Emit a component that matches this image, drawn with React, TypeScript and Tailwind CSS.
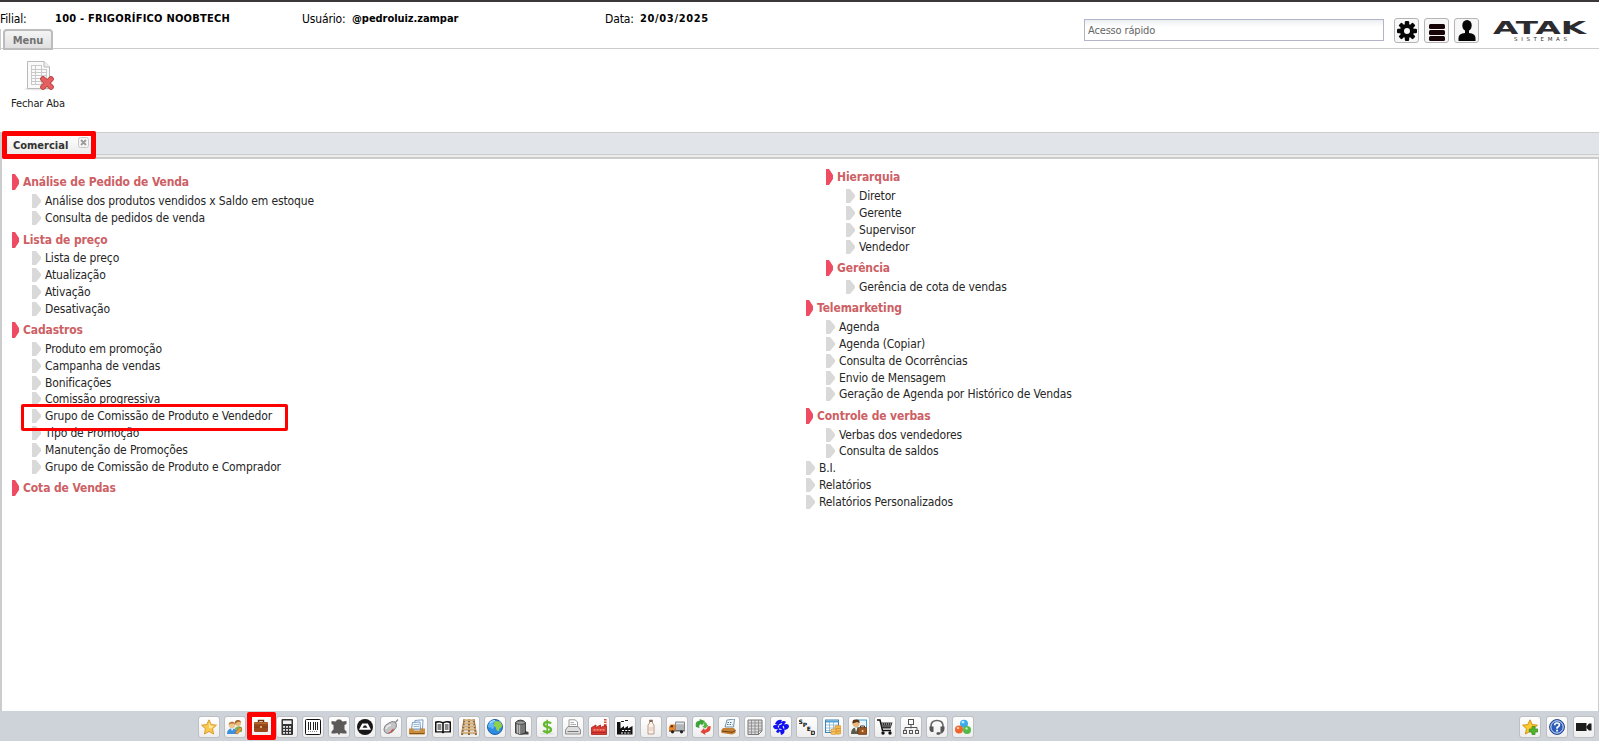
import type { ReactNode } from "react";

type Entry = { label: string; kind: "group" | "item"; depth: 0 | 1 | 2 };

const g = (label: string, depth: 0 | 1 | 2 = 0): Entry => ({ label, kind: "group", depth });
const i = (label: string, depth: 0 | 1 | 2 = 1): Entry => ({ label, kind: "item", depth });

const leftEntries: Entry[] = [
  g("Análise de Pedido de Venda"),
  i("Análise dos produtos vendidos x Saldo em estoque"),
  i("Consulta de pedidos de venda"),
  g("Lista de preço"),
  i("Lista de preço"),
  i("Atualização"),
  i("Ativação"),
  i("Desativação"),
  g("Cadastros"),
  i("Produto em promoção"),
  i("Campanha de vendas"),
  i("Bonificações"),
  i("Comissão progressiva"),
  i("Grupo de Comissão de Produto e Vendedor"),
  i("Tipo de Promoção"),
  i("Manutenção de Promoções"),
  i("Grupo de Comissão de Produto e Comprador"),
  g("Cota de Vendas"),
];

const rightEntries: Entry[] = [
  g("Hierarquia", 1),
  i("Diretor", 2),
  i("Gerente", 2),
  i("Supervisor", 2),
  i("Vendedor", 2),
  g("Gerência", 1),
  i("Gerência de cota de vendas", 2),
  g("Telemarketing"),
  i("Agenda"),
  i("Agenda (Copiar)"),
  i("Consulta de Ocorrências"),
  i("Envio de Mensagem"),
  i("Geração de Agenda por Histórico de Vendas"),
  g("Controle de verbas"),
  i("Verbas dos vendedores"),
  i("Consulta de saldos"),
  i("B.I.", 0),
  i("Relatórios", 0),
  i("Relatórios Personalizados", 0),
];

const indent = { 0: "pl-0", 1: "pl-5", 2: "pl-10" };

function MenuRow({ entry }: { entry: Entry }) {
  const pad = indent[entry.depth];
  if (entry.kind === "group") {
    return (
      <li className={`flex h-[23.4px] items-center pt-[3px] ${pad}`}>
        <svg className="mr-1 h-4 w-[7px] shrink-0" viewBox="0 0 7 16">
          <path d="M0 0H3L7 6V10L3 16H0Z" fill="#ef4b63" />
        </svg>
        <a className="text-[12px] leading-4 font-bold tracking-[-0.12px] whitespace-nowrap text-[#cd6064]">
          {entry.label}
        </a>
      </li>
    );
  }
  return (
    <li className={`flex h-[16.83px] items-center ${pad}`}>
      <svg className="mr-1 h-3.5 w-[9px] shrink-0" viewBox="0 0 9 14">
        <path d="M0 0H4L9 6V8L4 14H0Z" fill="#d9d9d9" />
      </svg>
      <a className="text-[12px] leading-4 tracking-[-0.14px] whitespace-nowrap text-[#262626]">{entry.label}</a>
    </li>
  );
}

function Ico({ children }: { children: ReactNode }) {
  return (
    <svg className="h-4 w-4 shrink-0" viewBox="0 0 16 16">
      {children}
    </svg>
  );
}

const star = "M8 .8L10.2 5.6L15.4 6.2L11.5 9.8L12.6 15L8 12.4L3.4 15L4.5 9.8L.6 6.2L5.8 5.6Z";

const StarIcon = (
  <Ico>
    <path d={star} fill="#fbc84f" stroke="#d99a2b" />
    <path d="M8 3L9.3 6.6L13 7L10 9.2L8 9Z" fill="#fde9a0" />
  </Ico>
);
const UsersIcon = (
  <Ico>
    <circle cx="11" cy="4" r="3" fill="#e9b87a" />
    <path d="M8 3.5C8 0 14 0 14 3.5L13 2.8H10L8.8 5Z" fill="#9a5a1c" />
    <path d="M8 12V9Q11 6 15 8.500V13Z" fill="#7db35a" />
    <circle cx="5" cy="6" r="3.200" fill="#f0c58e" />
    <path d="M1.700 6C1.500 1.500 8.500 1.500 8.300 6L7 4.500H3.500Z" fill="#b4702a" />
    <path d="M0 15Q0 9.500 5 9.500Q10 9.500 10 15Z" fill="#3d8fe0" />
    <path d="M4 9.500L5 12L6.500 9.500Z" fill="#fff" />
    <path d="M8 14L13 8L15 10L10.500 15Z" fill="#e8a13c" stroke="#a96a1d" strokeWidth=".6" />
  </Ico>
);
const BriefcaseIcon = (
  <Ico>
    <path d="M5.500 4V2.500H10.500V4" fill="none" stroke="#6b3312" strokeWidth="1.400" />
    <rect x="1" y="4" width="14" height="10" rx="1.300" fill="#98481c" />
    <path d="M1 8.700H15V9.400H1Z" fill="#74340f" />
    <rect x="1.500" y="4.500" width="13" height="1.500" fill="#b9652f" />
    <rect x="7.200" y="8" width="1.600" height="2" fill="#e9c58d" />
  </Ico>
);
const CalculatorIcon = (
  <Ico>
    <rect x="2.500" y="0" width="11.500" height="16" rx="1" fill="#333" />
    <rect x="4" y="1.500" width="8.500" height="3.500" fill="#f1f1f1" />
    {[7, 10, 13].map((y) =>
      [4, 7, 10].map((x) => <rect key={`${x}-${y}`} x={x} y={y} width="2" height="1.800" fill="#ddd" />),
    )}
  </Ico>
);
const BarcodeIcon = (
  <Ico>
    <rect x=".5" y=".5" width="15" height="15" rx="1" fill="#fff" stroke="#111" />
    <path d="M3.500 3V11M5.500 3V11M8.500 3V11M10.500 3V11M12.500 3V11" stroke="#222" />
    <path d="M3 12.500H13" stroke="#888" strokeDasharray="1 1" />
  </Ico>
);
const LeatherIcon = (
  <Ico>
    <path
      d="M.5 2L4.500 2.500L6.500 .5H9.500L11.500 2.500L15.500 2V5L13.500 6V10.500L15.500 12.500V14.500L12 14.500L9.500 14L8 16L6.500 14L4 14.500H.5V12.500L2.500 10.500V6L.5 5Z"
      fill="#5c5a58"
    />
  </Ico>
);
const AtakIcon = (
  <Ico>
    <circle cx="8" cy="8" r="8" fill="#171717" />
    <path d="M2 10.800L5.200 4.500H10.800L14 10.800Z" fill="#fff" />
    <path d="M5.500 8.800L7 6.500H9L10.500 8.800Z" fill="#171717" />
  </Ico>
);
const MeatIcon = (
  <Ico>
    <path d="M1 10Q1 6 6 4Q9 1.500 12 3Q14.500 5 13 8.500Q10 14 5.500 14.500Q1 14.500 1 10Z" fill="#c3c3c5" stroke="#858588" />
    <path d="M3 10Q4 6.500 8 6" fill="none" stroke="#eee" strokeWidth="1.500" />
    <path d="M12 4L15 .5" stroke="#888" strokeWidth="1.200" />
    <path d="M5.500 13.500Q8 13 9 10.500L11 9.500Q10 13.500 5.500 14.500Z" fill="#c9473c" />
  </Ico>
);
const TrayIcon = (
  <Ico>
    <path d="M6 1.500L14 .8L13.500 10H5Z" fill="#fff" stroke="#5b87b5" strokeWidth=".8" />
    <path d="M3.500 3.500L11 3L11.500 10H2.500Z" fill="#f4f9fd" stroke="#5b87b5" strokeWidth=".8" />
    <path d="M4.500 5.500H10M4.500 7.500H10" stroke="#9bbad6" />
    <path d="M0 9.500H4L5.500 11.500H10.500L12 9.500H16V14.500Q16 15.500 15 15.500H1Q0 15.500 0 14.500Z" fill="#c98d3d" />
    <path d="M.5 14.500H15.500" stroke="#84551b" />
  </Ico>
);
const BookIcon = (
  <Ico>
    <path d="M0 2.500Q4 1.500 8 3Q12 1.500 16 2.500V13.500H9.500L8 14.500L6.500 13.500H0Z" fill="#111" />
    <path d="M1.500 4Q4.500 3 7.200 4.300V12.300H1.500ZM8.800 4.300Q11.500 3 14.500 4V12.300H8.800Z" fill="#fff" />
    <path d="M2.500 6H6.300M2.500 8H6.300M2.500 10H6.300M9.800 6H13.500M9.800 8H13.500M9.800 10H13.500" stroke="#111" />
  </Ico>
);
const PalletIcon = (
  <Ico>
    <path d="M3.500 0L1 16M12.500 0L15 16M8 0V16" stroke="#8b6436" strokeWidth="2" />
    <path d="M3 1.200H13M2.700 4.200H13.300M2 7.200H14M1.200 10.200H14.800M.4 13.500H15.600" stroke="#d8b27c" strokeWidth="1.700" />
    <path d="M3 2.300H13M2.500 5.300H13.500M1.800 8.300H14.200M1 11.300H15M.4 14.700H15.600" stroke="#9a7040" strokeWidth=".5" />
  </Ico>
);
const GlobeIcon = (
  <Ico>
    <circle cx="8" cy="8" r="7.500" fill="#2d8ce0" stroke="#1a5cab" />
    <path d="M5 1.200Q1 3.500 1 8Q3 9 4 8L5 10.500Q7 9.500 7.500 6.500L6 4.500L8.500 2.500Z" fill="#5fb8f5" />
    <path d="M8 2L13 2.500Q15.500 5 15 8L12.500 9.500L12 12.500L9.500 11L8.500 8L6.500 6.500Z" fill="#8fd14c" />
    <path d="M3 4Q5 1.700 8 1.500" fill="none" stroke="#c9f0ff" />
  </Ico>
);
const BarrelIcon = (
  <Ico>
    <path d="M12 12L15.500 13V15.500H8Z" fill="#444" />
    <path d="M2.500 3.500Q7.500-1.500 12.500 3.500V14Q7.500 17 2.500 14Z" fill="#777" stroke="#2a2a2a" strokeWidth=".8" />
    <path d="M4.500 5V14.500M6.500 5V15" stroke="#bdbdbd" strokeWidth="1.200" />
    <ellipse cx="7.500" cy="3.600" rx="4.800" ry="1.800" fill="#9b9b9b" stroke="#333" strokeWidth=".7" />
  </Ico>
);
const DollarIcon = (
  <Ico>
    <ellipse cx="8" cy="14.800" rx="7" ry="1" fill="#e0e0e0" />
    <path
      d="M12 4.500Q11 3.200 8.300 3.200Q5 3.200 5 5.500Q5 7.300 8.300 7.900Q12 8.500 12 10.800Q12 13 8.300 13Q5.300 13 4.200 11.500"
      fill="none"
      stroke="#62b92f"
      strokeWidth="2.300"
    />
    <path d="M8.200 .8V15" stroke="#62b92f" strokeWidth="1.600" />
  </Ico>
);
const PrinterIcon = (
  <Ico>
    <path d="M4 8V.8H10L12.500 3V8" fill="#fff" stroke="#999" />
    <path d="M5.500 3.500H9M5.500 5.500H11" stroke="#aaa" />
    <path d="M3 7.500H13L15.500 11V15H.5V11Z" fill="#dedede" stroke="#8e8e8e" />
    <path d="M2.500 12.500H13.500" stroke="#777" />
  </Ico>
);
const RedFactoryIcon = (
  <Ico>
    <path d="M13 0H15.500V8H13Z" fill="#d94a3a" />
    <path d="M13 2H15.500M13 4.500H15.500" stroke="#fff" />
    <path d="M.5 15.500V8.500L5 6V8.500L9.500 6V8.500L13 7H15.500V15.500Z" fill="#d93b30" stroke="#a8201c" strokeWidth=".8" />
    <path d="M2.500 10.800H13.500" stroke="#f5a79c" strokeWidth="1.300" strokeDasharray="2 1" />
    <path d="M1 13.500H15" stroke="#aa211c" strokeWidth=".8" />
  </Ico>
);
const FactoryIcon = (
  <Ico>
    <path d="M0 15.500V3H3.500V9.500L7 7V9.500L11 7V9.500L15.500 7V15.500Z" fill="#111" />
    <path d="M5 11.500H14M4 14H14" stroke="#fff" strokeWidth="1.200" strokeDasharray="2 1.200" />
    <path d="M4 2.500H7M8 1.500H11" stroke="#222" strokeWidth="1.200" />
  </Ico>
);
const BottleIcon = (
  <Ico>
    <path d="M6.500 1H9.500V4L11 6V15H5V6L6.500 4Z" fill="#fbf1ea" stroke="#b89c8b" />
    <path d="M6.500 1H9.500V3H6.500Z" fill="#7f685b" />
    <path d="M6 8H10V12H6Z" fill="#efd8ca" />
  </Ico>
);
const TruckIcon = (
  <Ico>
    <path d="M6.500 3H15.500V11.500H6.500Z" fill="#b3b7bb" stroke="#858a8f" />
    <path d="M7 4.500H15" stroke="#e2e5e7" strokeWidth="1.500" />
    <path d="M0 12.500V8L1.500 5.500H6V12.500Z" fill="#ef8421" />
    <path d="M1.200 8L2.200 6.300H4V8.300H1.200Z" fill="#513018" />
    <path d="M0 12H16" stroke="#444" strokeWidth=".8" />
    <circle cx="3.500" cy="12.800" r="1.600" fill="#222" />
    <circle cx="12.500" cy="12.800" r="1.600" fill="#222" />
  </Ico>
);
const SyncIcon = (
  <Ico>
    <path d="M1 8Q-.5 2 5 1.500L4.500 0L10 2L7 6.500L6 5Q3.500 5.500 4.500 9Z" fill="#3da33a" />
    <path d="M8 3Q12 2.500 12 6L13.500 6L10.500 9.500L7 7.500L8.700 7Q9 5 8 3Z" fill="#54b947" />
    <path d="M12.500 7.500L15.500 7Q16.500 13 10 14L10.500 16L5.500 13L9 9L9.500 10.800Q12.500 10.500 12.500 7.500Z" fill="#df4538" />
  </Ico>
);
const RegisterIcon = (
  <Ico>
    <path d="M6 1L13.500 0L12.500 8H4Z" fill="#f0f7fb" stroke="#587991" strokeWidth=".8" />
    <path d="M6.500 3.500H11.500M6 5.500H11.500" stroke="#557b99" strokeDasharray="1.500 1" />
    <path d="M2 9H13L14.500 11V14L11 15.500L.5 14V11Z" fill="#c58136" />
    <path d="M.5 12L11 13.300L14.500 11.500" fill="none" stroke="#70400e" />
  </Ico>
);
const SheetIcon = (
  <Ico>
    <path d="M1 1H15V12L11.500 15.500H1Z" fill="#ddd" stroke="#777" />
    <path d="M1 4H15M1 7H15M1 10H15M1 13H12M4.500 1V15M8 1V15M11.500 1V12" stroke="#888" strokeWidth=".8" />
    <path d="M11.500 15.500V12H15Z" fill="#fff" stroke="#777" />
  </Ico>
);
const PinwheelIcon = (
  <Ico>
    <path
      d="M2 5Q4 0 9 1L8 3Q11 1 13 3L11 5.500Q16 4 16 8Q14 11.500 11.500 10.500Q12 15 8 16L7 12Q5 15.500 3 12.500L5 10Q.5 11 0 7Q1 5.500 4.500 6Z"
      fill="#1010f0"
    />
    <path d="M6 6L9 4.500M10 7L11 9.500M8.500 10.500L5.800 10M5.500 8.500L5.300 6.500" stroke="#f5f5ff" strokeWidth="1.100" />
  </Ico>
);
const SpedIcon = (
  <Ico>
    <g fontFamily="DejaVu Sans, sans-serif" fontWeight="700" fontSize="6" fill="#111">
      <text x="-.5" y="5">S</text>
      <text x="3.700" y="8">P</text>
      <text x="7.700" y="11.500">E</text>
      <text x="11.500" y="15.500">D</text>
    </g>
  </Ico>
);
const TableCoinsIcon = (
  <Ico>
    <rect x=".5" y="1" width="13" height="12.500" fill="#fff" stroke="#3c83b8" />
    <path d="M1 2.500H13" stroke="#55a2d6" strokeWidth="2" />
    <path d="M1 6H13M1 9H13M1 11.500H7M4.500 3V13M8.500 3V13" stroke="#78a9c7" strokeWidth=".7" />
    <path d="M10 7Q13 5.500 16 7V14.500Q13 16 10 14.500Z" fill="#f3b74b" stroke="#d08a2c" strokeWidth=".6" />
    <path d="M6 10.500Q8.500 9.500 11 10.500V15Q8.500 16 6 15Z" fill="#f6c765" stroke="#d08a2c" strokeWidth=".6" />
    <path d="M11 9.500H16M11 12H16M6 12.700H11" stroke="#d08a2c" strokeWidth=".7" />
  </Ico>
);
const ManagerIcon = (
  <Ico>
    <rect x="6" y="1" width="9.500" height="8" fill="#e6f6ff" stroke="#3da0c7" />
    <circle cx="5" cy="4.500" r="3.500" fill="#eab77c" />
    <path d="M1.500 4.500Q1 0 5 .5Q9 0 8.500 4L6 3Z" fill="#5b3415" />
    <path d="M0 15Q0 8.500 5 8.500Q10 8.500 10 15Z" fill="#555a4b" />
    <path d="M4 8.500L5 13L6.500 8.500Z" fill="#fff" />
    <rect x="7" y="8.500" width="9" height="7" rx="1" fill="#9a5520" stroke="#5e2f0d" strokeWidth=".6" />
    <path d="M9.500 8.500V7H13.500V8.500" fill="none" stroke="#5e2f0d" />
    <rect x="10.800" y="11" width="1.500" height="2" fill="#f3d698" />
  </Ico>
);
const CartIcon = (
  <Ico>
    <path d="M0 1H3L5.500 11.500H14" fill="none" stroke="#111" strokeWidth="1.500" />
    <path d="M3.500 3.500H15.500L13.500 9.500H5Z" fill="#333" />
    <path d="M5 5H15M5.500 7H14" stroke="#fff" strokeWidth=".8" strokeDasharray="1 1" />
    <circle cx="6" cy="14" r="1.700" fill="#111" />
    <circle cx="13" cy="14" r="1.700" fill="#111" />
  </Ico>
);
const TreeIcon = (
  <Ico>
    <g fill="none" stroke="#555">
      <rect x="5.500" y=".5" width="5" height="5" />
      <path d="M8 5.500V9.500M2 11V8.500H14V11" />
      <rect x=".5" y="11.500" width="3" height="3" />
      <rect x="6.500" y="11.500" width="3" height="3" />
      <rect x="12.500" y="11.500" width="3" height="3" />
    </g>
  </Ico>
);
const HeadsetIcon = (
  <Ico>
    <path d="M2 9V7Q2 1.500 8 1.500Q14 1.500 14 7V11Q14 14 9.500 14.500" fill="none" stroke="#666" strokeWidth="1.600" />
    <path d="M.5 7.500H4.500V13H2.500Q.5 12.500 .5 10Z" fill="#555" />
    <path d="M15.500 7.500H11.500V13H13.500Q15.500 12.500 15.500 10Z" fill="#555" />
    <rect x="7.500" y="13.300" width="3.500" height="2.400" rx="1" fill="#555" />
  </Ico>
);
const BallsIcon = (
  <Ico>
    <circle cx="9" cy="4.800" r="4" fill="#39a9ea" />
    <circle cx="4" cy="10.500" r="4" fill="#f0642d" />
    <circle cx="12" cy="11" r="4" fill="#54b947" />
    <circle cx="8" cy="3.200" r="1.400" fill="#b9e6ff" />
    <circle cx="3" cy="9" r="1.300" fill="#ffc3a5" />
    <circle cx="11.500" cy="9.500" r="1.200" fill="#b9efae" />
  </Ico>
);
const AddFavoriteIcon = (
  <Ico>
    <path d={star} fill="#fcc92f" stroke="#cf9512" />
    <path d="M10 7.500H13V10H15.800V13H13V15.700H10V13H7.300V10H10Z" fill="#4fb52f" stroke="#338a1b" strokeWidth=".7" />
  </Ico>
);
const HelpIcon = (
  <Ico>
    <circle cx="8" cy="8" r="7.400" fill="#2c5cb8" stroke="#1e4289" />
    <circle cx="8" cy="8" r="6.200" fill="none" stroke="#d7e4fa" strokeWidth="1" />
    <path
      d="M5.700 6.300Q5.700 4 8 4Q10.400 4 10.400 6Q10.400 7.300 8.100 8.500V9.700"
      fill="none"
      stroke="#fff"
      strokeWidth="1.700"
    />
    <rect x="7.200" y="10.700" width="1.800" height="1.800" fill="#fff" />
  </Ico>
);
const CameraIcon = (
  <Ico>
    <rect x="0" y="4" width="10.500" height="8" fill="#1c1c1c" />
    <path d="M10.500 7.500L13 4.500H15.500V11.500H13L10.500 9Z" fill="#1c1c1c" />
  </Ico>
);

const tools: { name: string; icon: ReactNode }[] = [
  { name: "Favoritos", icon: StarIcon },
  { name: "Cadastros", icon: UsersIcon },
  { name: "Comercial", icon: BriefcaseIcon },
  { name: "Contábil", icon: CalculatorIcon },
  { name: "Etiquetas", icon: BarcodeIcon },
  { name: "Couro", icon: LeatherIcon },
  { name: "Atak", icon: AtakIcon },
  { name: "Carnes", icon: MeatIcon },
  { name: "Documentos", icon: TrayIcon },
  { name: "Livros", icon: BookIcon },
  { name: "Estoque", icon: PalletIcon },
  { name: "Exportação", icon: GlobeIcon },
  { name: "Tanques", icon: BarrelIcon },
  { name: "Financeiro", icon: DollarIcon },
  { name: "Impressão", icon: PrinterIcon },
  { name: "Produção", icon: RedFactoryIcon },
  { name: "Indústria", icon: FactoryIcon },
  { name: "Leite", icon: BottleIcon },
  { name: "Transporte", icon: TruckIcon },
  { name: "Sincronização", icon: SyncIcon },
  { name: "Caixa", icon: RegisterIcon },
  { name: "Planilhas", icon: SheetIcon },
  { name: "Integração", icon: PinwheelIcon },
  { name: "Fiscal", icon: SpedIcon },
  { name: "Custos", icon: TableCoinsIcon },
  { name: "Gestão", icon: ManagerIcon },
  { name: "Compras", icon: CartIcon },
  { name: "Organograma", icon: TreeIcon },
  { name: "Atendimento", icon: HeadsetIcon },
  { name: "Módulos", icon: BallsIcon },
];

const sideTools = [
  { name: "Adicionar favorito", icon: AddFavoriteIcon },
  { name: "Ajuda", icon: HelpIcon },
  { name: "Vídeos", icon: CameraIcon },
];

function ToolButton({ name, children }: { name: string; children: ReactNode }) {
  return (
    <button
      aria-label={name}
      className="flex h-[22px] w-[22px] shrink-0 items-center justify-center rounded-[3px] border border-[#bdbfc2] bg-linear-to-b from-white to-[#eeeeee]"
    >
      {children}
    </button>
  );
}

function HeaderButton({ name, children }: { name: string; children: ReactNode }) {
  return (
    <button
      aria-label={name}
      className="flex h-[25px] w-[25px] items-center justify-center rounded-[3px] border border-[#b5b5b5] bg-[#f7f7f7]"
    >
      {children}
    </button>
  );
}

function Header() {
  return (
    <header className="flex h-[49px] shrink-0 border-t-2 border-b border-t-[#3a3839] border-b-[#cccccc]">
      <div className="w-[1084px] shrink-0">
        <div className="flex h-[27px] items-center pt-1.5 text-[12px] leading-4 text-black">
          <div className="flex w-[302px]">
            <span className="w-[55px] tracking-[-0.15px]">Filial:</span>
            <b className="text-[11px] tracking-[0.24px]">100 - FRIGORÍFICO NOOBTECH</b>
          </div>
          <div className="flex w-[303px]">
            <span className="w-[50px] tracking-[-0.15px]">Usuário:</span>
            <b className="text-[11px] tracking-[-0.05px]">@pedroluiz.zampar</b>
          </div>
          <div className="flex">
            <span className="w-[35px] tracking-[-0.15px]">Data:</span>
            <b className="text-[11px] tracking-[0.65px]">20/03/2025</b>
          </div>
        </div>
        <div className="flex h-[21px] border-l border-[#cccccc] pl-0.5">
          <div className="flex h-[21px] w-[50px] items-center justify-center rounded-t-[4px] border-2 border-[#bcbcbc] bg-linear-to-b from-[#f4f4f4] to-[#e0e0e0] pt-[3px] text-[11px] font-bold text-[#727272]">
            Menu
          </div>
        </div>
      </div>
      <div className="mt-[17px] flex h-[22px] w-[300px] shrink-0 items-center border border-[#b3b3cc] bg-linear-to-b from-[#ebeef0] to-white to-35% pt-0.5 pl-[3px] text-[11px] tracking-[-0.16px] text-[#666]">
        Acesso rápido
      </div>
      <div className="mt-4 ml-[10px] flex gap-[5px]">
        <HeaderButton name="Configurações">
          <svg className="h-5 w-5" viewBox="0 0 20 20">
            <g fill="#050505">
              {[0, 45, 90, 135].map((a) => (
                <rect
                  key={a}
                  x="7.800"
                  y="0"
                  width="4.400"
                  height="20"
                  rx="1.200"
                  transform={`rotate(${a} 10 10)`}
                />
              ))}
              <circle cx="10" cy="10" r="7" />
            </g>
            <circle cx="10" cy="10" r="3" fill="#f7f7f7" />
          </svg>
        </HeaderButton>
        <HeaderButton name="Opções">
          <svg className="mt-1 h-[17px] w-4" viewBox="0 0 16 17">
            <g fill="#160406">
              <rect x="0" y="0" width="16" height="5" rx="1.500" />
              <rect x="0" y="6" width="16" height="5" rx="1.500" />
              <rect x="0" y="12" width="16" height="5" rx="1.500" />
            </g>
          </svg>
        </HeaderButton>
        <HeaderButton name="Usuário">
          <svg className="h-[21px] w-[18px]" viewBox="0 0 18 21">
            <ellipse cx="9" cy="5.500" rx="4.700" ry="5.500" fill="#050505" />
            <path d="M7 9H11V13Q17.500 13.500 17.500 18V21H.5V18Q.5 13.500 7 13Z" fill="#050505" />
          </svg>
        </HeaderButton>
      </div>
      <svg className="mt-[17px] ml-[14px] h-[24px] w-[95px]" viewBox="0 0 95 24">
        <g fontFamily="DejaVu Sans, sans-serif" fill="#2c2c30">
          <text x="0" y="14.500" fontSize="17" fontWeight="700" textLength="93" lengthAdjust="spacingAndGlyphs">
            ATAK
          </text>
          <text x="21" y="21.500" fontSize="5.500" textLength="53">
            SISTEMAS
          </text>
        </g>
      </svg>
    </header>
  );
}

function Ribbon() {
  return (
    <section className="h-[83px] shrink-0 pl-[11px]">
      <button className="mt-3 flex w-[54px] flex-col items-center">
        <svg className="ml-0.5 h-[30px] w-8" viewBox="0 0 32 30">
          <ellipse cx="14" cy="28" rx="13" ry="1.500" fill="#e9e9e9" />
          <path d="M4.500 .5H21L26.500 6V27.500H4.500Z" fill="#fafafa" stroke="#b9b9b9" />
          <path d="M21 .5V6H26.500" fill="#eee" stroke="#b9b9b9" />
          <path
            d="M8 4.500H19M8 8.500H24M8 11.500H24M8 14.500H24M8 17.500H24M8 20.500H20M8 23.500H19M8.500 4V24M12.500 4V24M18.500 4V24M23.500 8V17"
            stroke="#c9c9c9"
          />
          <path d="M20 18L28 26M28 18L20 26" stroke="#b93a3a" strokeWidth="5.600" strokeLinecap="round" />
          <path d="M20 18L28 26M28 18L20 26" stroke="#e26060" strokeWidth="4" strokeLinecap="round" />
        </svg>
        <span className="mt-[5px] text-[11px] leading-4 tracking-[-0.15px] whitespace-nowrap text-[#222]">
          Fechar Aba
        </span>
      </button>
    </section>
  );
}

function TabStrip() {
  return (
    <nav className="relative h-[27px] shrink-0 border-t border-l-2 border-[#cccccc] bg-[#e1e5e9]">
      <div className="h-[22px] border-b border-[#cccccc]" />
      <div className="h-[2px] bg-[#ececec]" />
      <div className="h-[2px] bg-[#cccccc]" />
      <div className="absolute top-[-2px] left-0 flex h-7 w-[94px] rounded-[2px] border-[5px] border-[#fe0000] bg-linear-to-b from-white to-[#ebebeb]">
        <span className="ml-1.5 text-[11px] leading-[19px] font-bold text-[#333]">Comercial</span>
        <svg className="mt-px ml-2.5 h-[11px] w-[11px]" viewBox="0 0 11 11">
          <rect x=".5" y=".5" width="10" height="10" rx="2" fill="#f6f6f6" stroke="#c6c6c6" />
          <path d="M3 3L8 8M8 3L3 8" stroke="#9b9b9b" strokeWidth="1.800" />
        </svg>
      </div>
    </nav>
  );
}

export default function App() {
  return (
    <div className="flex h-[741px] w-[1599px] flex-col overflow-hidden bg-white font-['DejaVu_Sans_Condensed','DejaVu_Sans',sans-serif]">
      <Header />
      <Ribbon />
      <TabStrip />
      <main className="relative flex min-h-0 flex-1 border-r border-l-2 border-[#cccccc]">
        <ul className="w-[794px] pt-[10.3px] pl-2.5">
          {leftEntries.map((e, n) => (
            <MenuRow key={n} entry={e} />
          ))}
        </ul>
        <ul className="flex-1 pt-[5.3px] pl-2.5">
          {rightEntries.map((e, n) => (
            <MenuRow key={n} entry={e} />
          ))}
        </ul>
        <div className="absolute top-[245px] left-[19px] h-[27px] w-[267px] rounded-[2px] border-[3px] border-[#fe0000]" />
      </main>
      <footer className="flex h-[30px] shrink-0 items-start bg-[#ced2d9] pt-[5px] pl-[198px]">
        <div className="flex gap-1">
          {tools.map((t) => (
            <div key={t.name} className="relative">
              <ToolButton name={t.name}>{t.icon}</ToolButton>
              {t.name === "Comercial" && (
                <span className="absolute -top-1 left-[-3px] flex h-7 w-[29px] items-center rounded-[2px] border-[5px] border-[#fe0000] bg-linear-to-b from-white to-[#eeeeee] pl-px">
                  {t.icon}
                </span>
              )}
            </div>
          ))}
        </div>
        <div className="ml-auto flex gap-[5px] pr-1">
          {sideTools.map((t) => (
            <ToolButton key={t.name} name={t.name}>
              {t.icon}
            </ToolButton>
          ))}
        </div>
      </footer>
    </div>
  );
}
